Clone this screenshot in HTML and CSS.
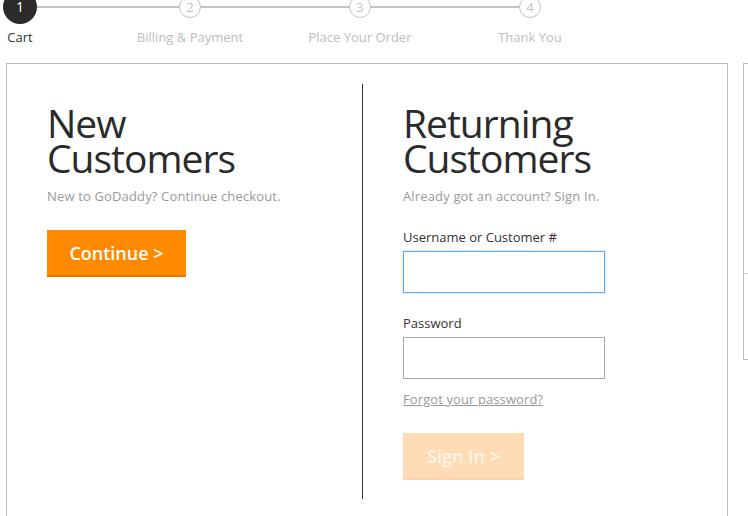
FILE: index.html
```html
<!DOCTYPE html>
<html>
<head>
<meta charset="utf-8">
<link rel="stylesheet" href="styles.css">
</head>
<body>
<div class="steps">
  <div class="step active"><div class="slot"><span class="dot">1</span></div><div class="label">Cart</div></div>
  <div class="step"><div class="slot"><span class="dot">2</span></div><div class="label">Billing &amp; Payment</div></div>
  <div class="step"><div class="slot"><span class="dot">3</span></div><div class="label">Place Your Order</div></div>
  <div class="step"><div class="slot"><span class="dot">4</span></div><div class="label">Thank You</div></div>
</div>
<div class="page">
  <div class="panel">
    <div class="col">
      <h1 class="title">New<br>Customers</h1>
      <p class="sub">New to GoDaddy? Continue checkout.</p>
      <button class="btn btn-primary">Continue &gt;</button>
    </div>
    <div class="col col-right">
      <h1 class="title">Returning<br>Customers</h1>
      <p class="sub">Already got an account? Sign In.</p>
      <label class="field-label">Username or Customer #</label>
      <div class="input input-focus"></div>
      <label class="field-label field-label-2">Password</label>
      <div class="input"></div>
      <a class="forgot" href="#">Forgot your password?</a>
      <button class="btn btn-disabled">Sign In &gt;</button>
    </div>
  </div>
  <div class="side">
    <div class="side-top"></div>
    <div class="side-bottom"></div>
  </div>
</div>
</body>
</html>
```
FILE: styles.css
```css
html, body {
  margin: 0;
  padding: 0;
  background: #fff;
  overflow: hidden;
}
body {
  font-family: "Open Sans", "Noto Sans", sans-serif;
  color: #333;
  font-size: 13px;
}
.steps {
  position: relative;
  display: flex;
  margin-left: -65px;
  margin-top: -10px;
  height: 73px;
}
.steps::before {
  content: "";
  position: absolute;
  left: 85px;
  width: 510px;
  top: 16px;
  height: 2px;
  background: #c4c4c4;
}
.step {
  position: relative;
  width: 170px;
  flex-shrink: 0;
  display: flex;
  flex-direction: column;
  align-items: center;
}
.slot {
  height: 34px;
  display: flex;
  align-items: center;
  justify-content: center;
}
.dot {
  width: 20px;
  height: 20px;
  border-radius: 50%;
  border: 1px solid #c4c4c4;
  background: #fff;
  color: #c4c4c4;
  font-size: 13px;
  line-height: 20px;
  text-align: center;
}
.step.active .dot {
  width: 34px;
  height: 34px;
  line-height: 34px;
  border: none;
  background: #2b2b2b;
  color: #fff;
  font-size: 14px;
}
.label {
  margin-top: 4px;
  line-height: 18px;
  color: #bdbdbd;
  white-space: nowrap;
}
.step.active .label {
  color: #333;
}
.page {
  display: flex;
  align-items: flex-start;
  gap: 15px;
  padding-left: 6px;
}
.panel {
  flex-shrink: 0;
  width: 722px;
  box-sizing: border-box;
  border: 1px solid #bbb;
  border-bottom: none;
  padding-top: 20px;
  height: 470px;
  display: grid;
  grid-template-columns: 355px 1fr;
  align-items: start;
}
.col {
  padding: 21px 0 19px 40px;
}
.col-right {
  border-left: 1px solid #333;
}
.title {
  margin: 0;
  font-size: 39px;
  line-height: 35px;
  font-weight: 400;
  color: #2b2b2b;
  letter-spacing: -1px;
}
.sub {
  margin: 12px 0 0;
  line-height: 18px;
  color: #999;
  letter-spacing: 0.15px;
}
.btn {
  display: block;
  border: none;
  font-family: inherit;
  font-size: 18px;
  font-weight: 600;
  color: #fff;
  height: 47px;
  padding: 0;
  margin-top: 25px;
  box-sizing: border-box;
  text-align: center;
}
.btn-primary {
  background: #ff8a00;
  border-bottom: 2px solid #ea7500;
  width: 139px;
}
.btn-disabled {
  background: #ffdcb6;
  border-bottom: 2px solid #ffd3a6;
  color: #fff6ea;
  width: 121px;
}
.field-label {
  display: block;
  margin-top: 23px;
  line-height: 18px;
  color: #333;
}
.field-label-2 {
  margin-top: 21px;
}
.input {
  margin-top: 5px;
  width: 202px;
  height: 42px;
  box-sizing: border-box;
  border: 1px solid #aaa;
}
.input-focus {
  border: 1px solid #5aa8e4;
  box-shadow: 0 0 1px #5aa8e4;
}
.forgot {
  display: block;
  margin-top: 11px;
  line-height: 18px;
  color: #999;
  text-decoration: underline;
  width: max-content;
  letter-spacing: 0.1px;
}
.forgot + .btn {
  margin-top: 25px;
}
.side {
  flex-shrink: 0;
  width: 20px;
  border: 1px solid #bbb;
  border-right: none;
  box-sizing: border-box;
  height: 297px;
  display: flex;
  flex-direction: column;
}
.side-top {
  height: 209px;
  border-bottom: 1px solid #ccc;
}
```
